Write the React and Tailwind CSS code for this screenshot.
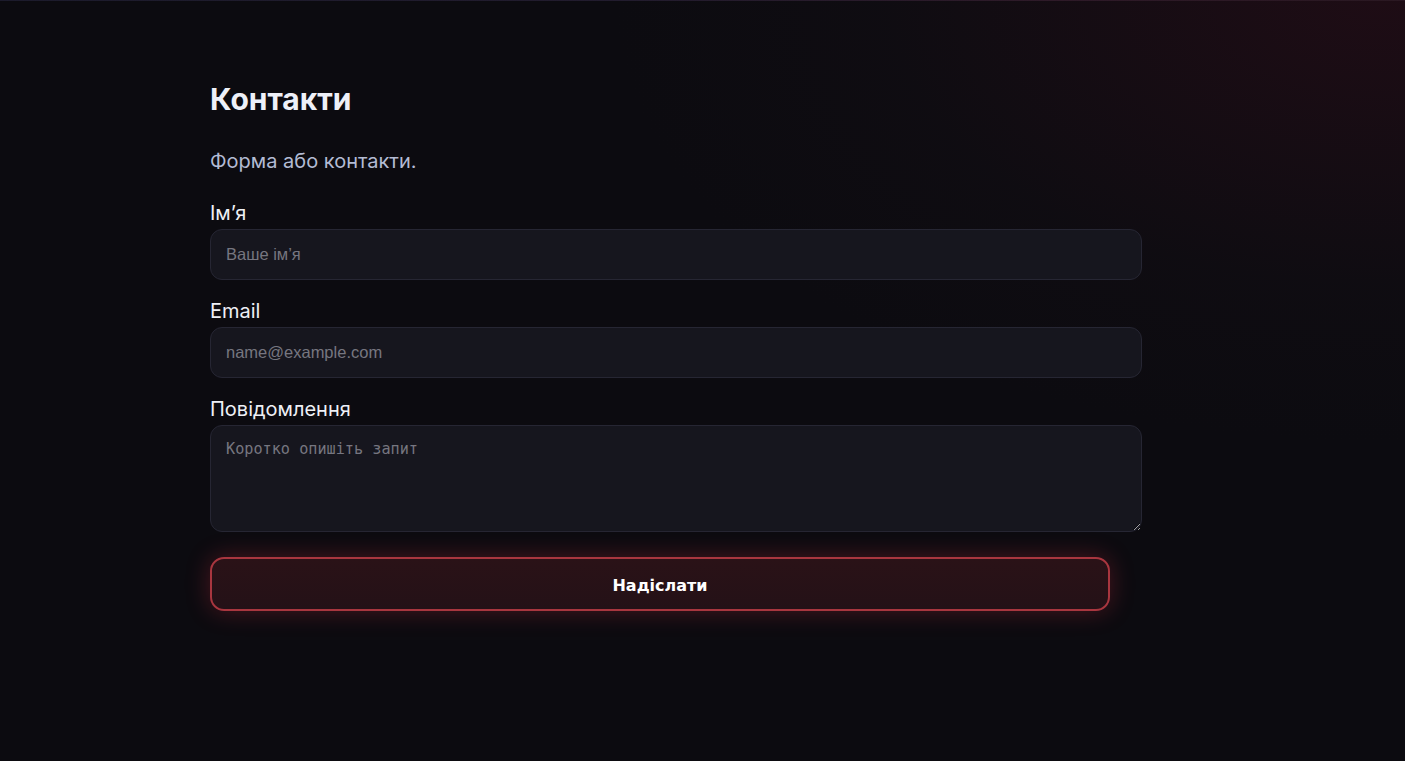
const Field = ({label, children}) => (
    <label className="block">
        <span className="block text-[20px] leading-6 text-[#eef0f6] mb-1">{label}</span>
        {children}
    </label>
);

const inputClass =
    "block w-full rounded-xl border border-[#262633] bg-[#16161e] px-[15px] text-[#e5e7ef] placeholder:text-[#767680] outline-none";

const App = () => {
    return (
        <div
            className="min-h-[761px] w-full bg-[#0c0b10] bg-[radial-gradient(ellipse_900px_520px_at_1380px_0px,rgba(48,14,26,0.5),rgba(20,14,20,0.35)_55%,transparent_85%)] font-['Inter','Noto_Sans',sans-serif]">
            <div className="h-px w-full bg-[linear-gradient(90deg,#1c1b2c,#221c2e_45%,#2e1a28_75%,#2a1822)]"/>
            <main className="pl-[210px] pt-[80px]">
                <section className="w-[932px]">
                    <h1 className="text-[30px] leading-9 font-bold text-[#eef0f8]">Контакти</h1>
                    <p className="mt-[30px] text-[20px] leading-7 text-[#b3bbd4]">Форма або контакти.</p>

                    <form className="mt-[26px]" onSubmit={(e) => e.preventDefault()}>
                        <Field label="Ім’я">
                            <input
                                type="text"
                                placeholder="Ваше ім’я"
                                className={`${inputClass} h-[51px] text-[16.5px] font-['Liberation_Sans',Arial,sans-serif]`}
                            />
                        </Field>
                        <div className="mt-[19px]">
                            <Field label="Email">
                                <input
                                    type="email"
                                    placeholder="name@example.com"
                                    className={`${inputClass} h-[51px] text-[16.5px] font-['Liberation_Sans',Arial,sans-serif]`}
                                />
                            </Field>
                        </div>
                        <div className="mt-[19px]">
                            <Field label="Повідомлення">
                                <textarea
                                    placeholder="Коротко опишіть запит"
                                    className={`${inputClass} h-[107px] py-[14px] text-[15.2px] leading-[19px] placeholder:text-[#7c7c86] font-['DejaVu_Sans_Mono',monospace]`}
                                />
                            </Field>
                        </div>
                        <button
                            type="submit"
                            className="mt-[25px] block h-[54px] w-[900px] rounded-[14px] border-2 border-[#a8363f] bg-[linear-gradient(180deg,#2a1217,#241117)] pt-[4px] text-[16px] font-bold text-white shadow-[0_0_24px_rgba(200,45,60,0.33)] font-['DejaVu_Sans',sans-serif]">
                            Надіслати
                        </button>
                    </form>
                </section>
            </main>
        </div>
    );
};

export default App;
